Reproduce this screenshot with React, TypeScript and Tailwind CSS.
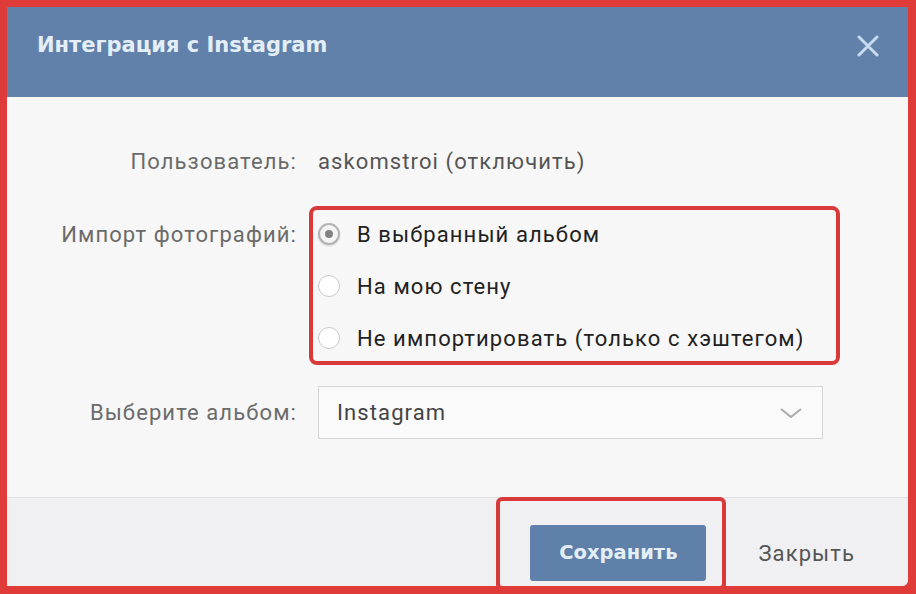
import { useState } from "react";

const OPTIONS = [
	"В выбранный альбом",
	"На мою стену",
	"Не импортировать (только с хэштегом)",
];

function Radio({ checked }: { checked: boolean }) {
	return (
		<span
			className={
				checked
					? "flex h-[22px] w-[22px] shrink-0 items-center justify-center rounded-full border-2 border-[#b4b4b4] bg-[#f4f4f4] shadow-[0_1px_2px_rgba(0,0,0,0.15)]"
					: "flex h-[22px] w-[22px] shrink-0 items-center justify-center rounded-full border border-[#c9c9c9] bg-white"
			}
		>
			{checked && <span className="h-[8px] w-[8px] rounded-full bg-[#828282]" />}
		</span>
	);
}

export default function App() {
	const [choice, setChoice] = useState(0);

	return (
		<div
			className="h-[594px] w-[916px] bg-[#de3b39] pb-[8px] pl-[7px] pr-[8px] pt-[7px] text-[22px] tracking-[1.1px]"
			style={{ fontFamily: "Roboto, 'Noto Sans', sans-serif" }}
		>
			<div className="flex h-full flex-col overflow-hidden rounded-br-[6px] bg-[#f7f7f7]">
				{/* Header */}
				<div className="flex h-[90px] shrink-0 items-start justify-between bg-[#6181aa] pl-[30px] pr-[29px] pt-[24px]">
					<h1
						className="text-[21px] font-bold leading-[28px] tracking-normal text-[#e4eef6]"
						style={{ fontFamily: "'DejaVu Sans', sans-serif" }}
					>
						Интеграция с Instagram
					</h1>
					<button type="button" className="mt-[4px] text-[#c8dcef]">
						<svg width="22" height="22" viewBox="0 0 22 22" fill="none">
							<path
								d="M2 2L20 20M20 2L2 20"
								stroke="currentColor"
								strokeWidth="3"
								strokeLinecap="round"
							/>
						</svg>
					</button>
				</div>

				{/* Body */}
				<div className="flex h-[400px] shrink-0 flex-col pt-[49px]">
					<div className="grid grid-cols-[290px_1fr] gap-x-[21px]">
						<div className="flex h-[30px] items-center justify-end text-[#6b6b6b]">
							Пользователь:
						</div>
						<div className="flex h-[30px] items-center text-[#555]">
							askomstroi (отключить)
						</div>
					</div>

					<div className="mt-[32px] grid grid-cols-[290px_1fr] gap-x-[21px]">
						<div className="flex h-[52px] items-center justify-end text-[#6b6b6b]">
							Импорт фотографий:
						</div>
						<div className="relative w-fit pr-[10px]">
							{OPTIONS.map((opt, i) => (
								<button
									key={opt}
									type="button"
									onClick={() => setChoice(i)}
									className="flex h-[52px] items-center gap-[17px] text-[#222]"
								>
									<Radio checked={choice === i} />
									{opt}
								</button>
							))}
							<div className="pointer-events-none absolute -bottom-[1px] -left-[9px] -right-[25px] -top-[2px] rounded-[8px] border-[4px] border-[#d8393a]" />
						</div>
					</div>

					<div className="mt-[22px] grid grid-cols-[290px_1fr] gap-x-[21px]">
						<div className="flex h-[53px] items-center justify-end text-[#6b6b6b]">
							Выберите альбом:
						</div>
						<div className="flex h-[53px] w-[505px] items-center justify-between border border-[#d6d6d6] bg-[#fafafa] pl-[18px] pr-[20px] text-[#444]">
							Instagram
							<svg width="22" height="10" viewBox="0 0 22 10" fill="none">
								<path d="M1 1L11 9L21 1" stroke="#aaaaaa" strokeWidth="2" />
							</svg>
						</div>
					</div>
				</div>

				{/* Footer */}
				<div className="flex flex-1 items-start justify-end border-t border-[#e2e2e4] bg-[#f0f0f2] pr-[53px] pt-[27px]">
					<div className="relative">
						<button
							type="button"
							className="h-[56px] w-[176px] rounded-[3px] bg-[#5e80a9] text-[19.5px] font-bold tracking-normal text-[#e4eef6]"
							style={{ fontFamily: "'DejaVu Sans', sans-serif" }}
						>
							Сохранить
						</button>
						<div className="pointer-events-none absolute -bottom-[9px] -left-[34px] -right-[20px] -top-[28px] rounded-[6px] border-[4px] border-[#d8393a]" />
					</div>
					<button
						type="button"
						className="ml-[52px] flex h-[56px] items-center text-[#555]"
					>
						Закрыть
					</button>
				</div>
			</div>
		</div>
	);
}
